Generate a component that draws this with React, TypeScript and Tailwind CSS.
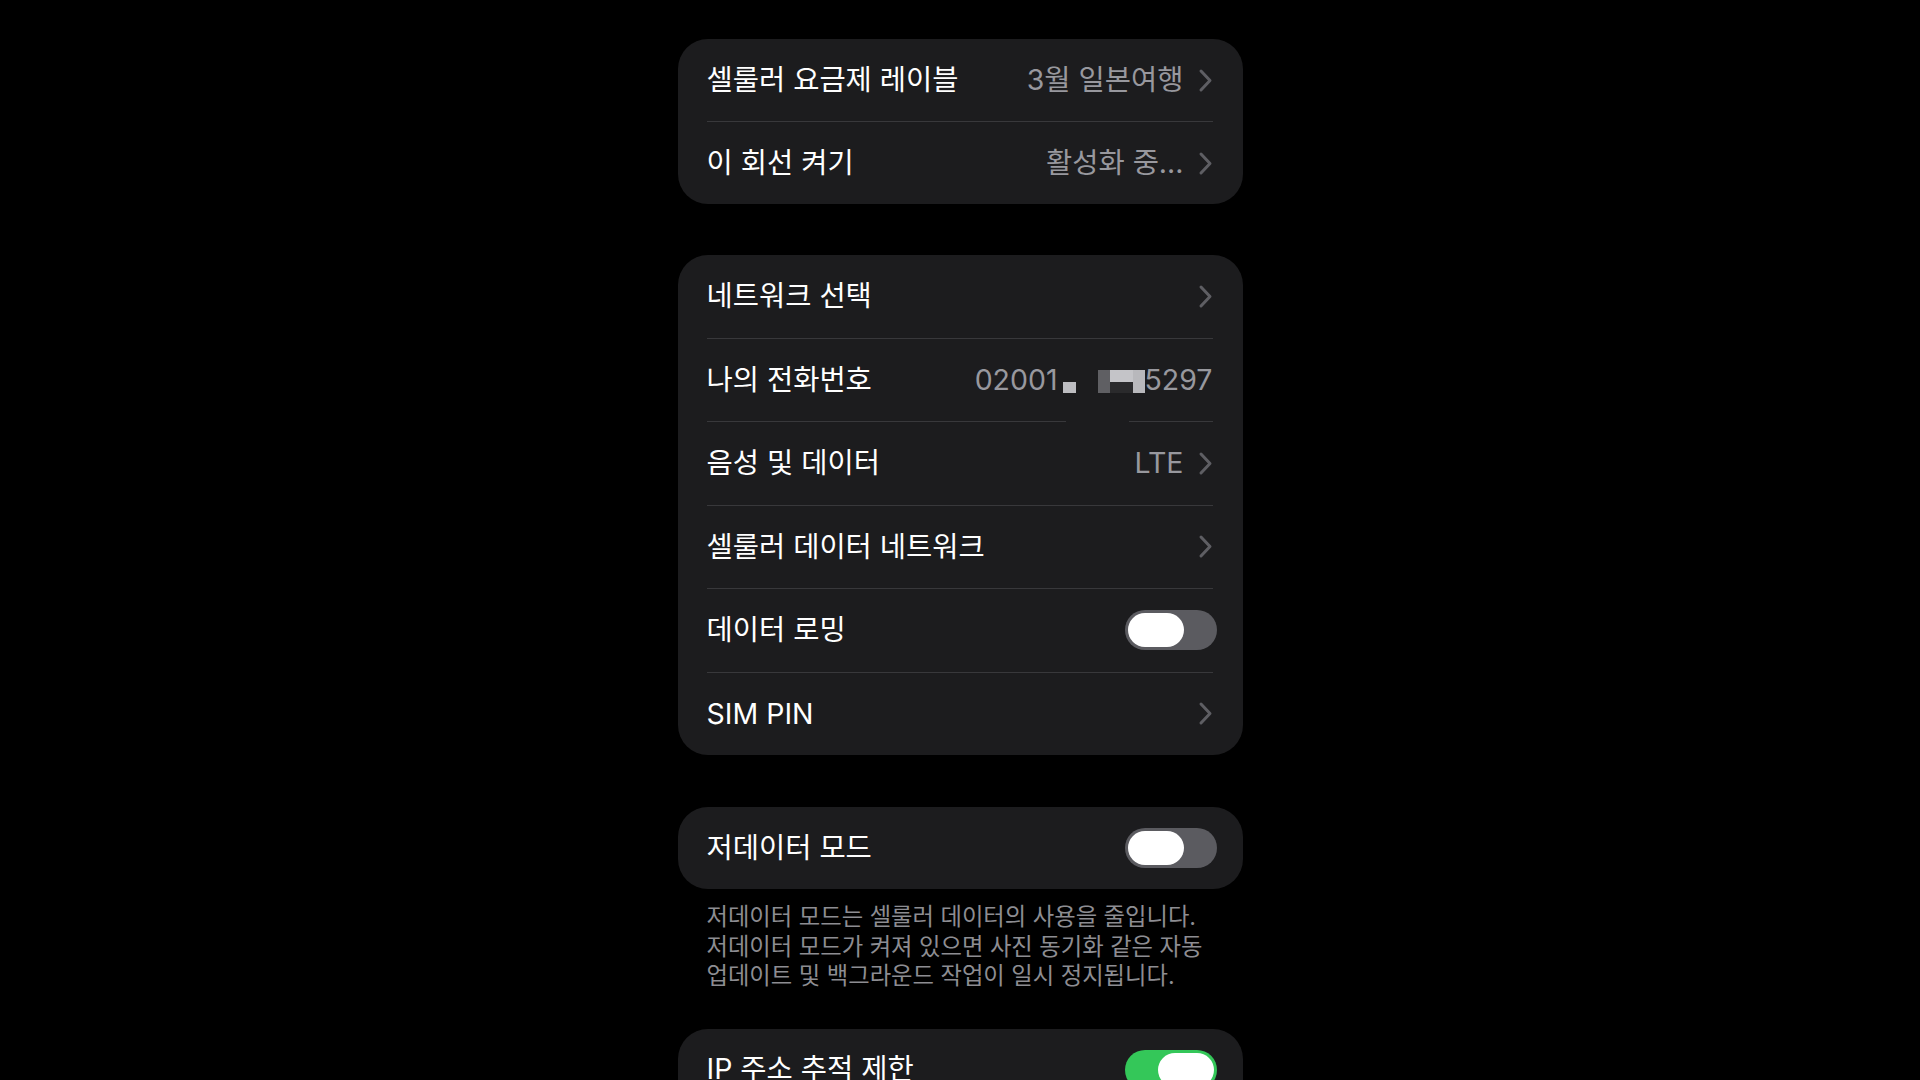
import React from "react";

const font = { fontFamily: 'Inter, "Noto Sans CJK KR", "Noto Sans", sans-serif' };

function Chevron() {
  return (
    <svg width="15" height="25" viewBox="0 0 15 25" className="shrink-0">
      <path d="M3 3 L12 12.5 L3 22" fill="none" stroke="#5e5e63" strokeWidth="3" strokeLinecap="round" strokeLinejoin="round" />
    </svg>
  );
}

function Toggle({ on }: { on?: boolean }) {
  return (
    <div className={`w-[92px] h-[40px] rounded-full flex items-center px-[3px] ${on ? "bg-[#34c759] justify-end" : "bg-[#5b5b60] justify-start"}`}>
      <div className="w-[56px] h-[34px] rounded-full bg-white" />
    </div>
  );
}

function Divider({ gap }: { gap?: boolean }) {
  if (gap) {
    return (
      <div className="flex ml-[29px] mr-[30px] h-px">
        <div className="w-[359px] h-px bg-[#38383b]" />
        <div className="flex-1" />
        <div className="w-[84px] h-px bg-[#38383b]" />
      </div>
    );
  }
  return <div className="ml-[29px] mr-[30px] h-px bg-[#38383b]" />;
}

function Row({
  label,
  value,
  chevron,
  toggle,
  tall,
  children,
}: {
  label: string;
  value?: string;
  chevron?: boolean;
  toggle?: "on" | "off";
  tall?: boolean;
  children?: React.ReactNode;
}) {
  return (
    <div className={`${tall ? "h-[82.5px]" : "h-[82px]"} flex items-center pl-[29px] pr-[26px]`}>
      <div className="flex-1 text-white text-[28.5px] leading-none">{label}</div>
      {value && <div className="text-[#98989e] text-[28.5px] leading-none mr-[14px]">{value}</div>}
      {children}
      {chevron && <div className="mr-[4px]"><Chevron /></div>}
      {toggle && <Toggle on={toggle === "on"} />}
    </div>
  );
}

function Card({ children }: { children: React.ReactNode }) {
  return <div className="bg-[#1c1c1e] rounded-[30px] overflow-hidden">{children}</div>;
}

export default function App() {
  return (
    <div className="w-[1920px] h-[1080px] bg-black overflow-hidden" style={font}>
      <div className="w-[565px] mx-auto pt-[39px] flex flex-col">
        <Card>
          <Row label="셀룰러 요금제 레이블" value="3월 일본여행" chevron />
          <Divider />
          <Row label="이 회선 켜기" value="활성화 중..." chevron />
        </Card>

        <div className="h-[51px]" />

        <Card>
          <Row label="네트워크 선택" chevron tall />
          <Divider />
          <Row label="나의 전화번호" tall>
            <div className="flex items-end text-[#98989e] text-[28.5px] leading-none mr-[4px]">
              <span>02001</span>
              <div className="w-[13px] h-[11px] bg-[#bdbdc1] mb-[1px] ml-[5px]" />
              <div className="w-[22px]" />
              <div className="flex mb-[1px]">
                <div className="w-[12px] h-[23px] bg-[#5f5f63]" />
                <div className="flex flex-col w-[23px]">
                  <div className="h-[12px] bg-[#c4c4c8]" />
                  <div className="h-[11px] bg-[#2a2a2c]" />
                </div>
                <div className="w-[12px] h-[23px] bg-[#b8b8bc]" />
              </div>
              <span>5297</span>
            </div>
          </Row>
          <Divider gap />
          <Row label="음성 및 데이터" value="LTE" chevron tall />
          <Divider />
          <Row label="셀룰러 데이터 네트워크" chevron tall />
          <Divider />
          <Row label="데이터 로밍" toggle="off" tall />
          <Divider />
          <Row label="SIM PIN" chevron tall />
        </Card>

        <div className="h-[52px]" />

        <Card>
          <Row label="저데이터 모드" toggle="off" />
        </Card>

        <div className="px-[29px] pt-[13px] text-[#8d8d92] text-[23.3px] leading-[29.5px]">
          저데이터 모드는 셀룰러 데이터의 사용을 줄입니다.
          <br />
          저데이터 모드가 켜져 있으면 사진 동기화 같은 자동
          <br />
          업데이트 및 백그라운드 작업이 일시 정지됩니다.
        </div>

        <div className="h-[38px]" />

        <Card>
          <Row label="IP 주소 추적 제한" toggle="on" />
        </Card>
      </div>
    </div>
  );
}
